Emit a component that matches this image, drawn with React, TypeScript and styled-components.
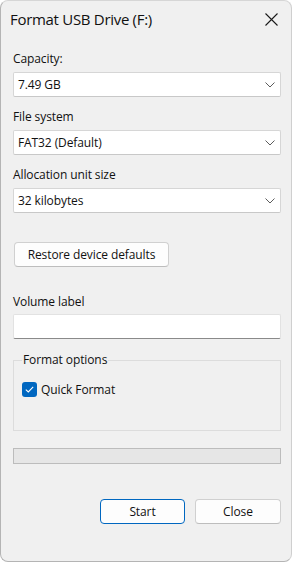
import React from "react";
import styled, { createGlobalStyle } from "styled-components";

const GlobalStyle = createGlobalStyle`
  html, body {
    margin: 0;
    padding: 0;
    background: #ffffff;
  }
  body {
    font-family: "Open Sans", "Noto Sans", sans-serif;
    color: #111111;
  }
`;

const Window = styled.div`
  width: 292px;
  height: 562px;
  box-sizing: border-box;
  background: #f0f0f0;
  border: 1px solid #b4b4b4;
  border-top-color: #d6d6d6;
  border-right-color: #cfcfcf;
  border-radius: 8px;
  display: flex;
  flex-direction: column;
  overflow: hidden;
`;

const TitleBar = styled.div`
  height: 36px;
  display: flex;
  align-items: center;
  justify-content: space-between;
  padding: 0 13px 0 9px;
`;

const Title = styled.div`
  font-size: 15px;
  letter-spacing: -0.3px;
  color: #111111;
`;

const CloseX = styled.div`
  width: 14px;
  height: 14px;
  display: flex;
  align-items: center;
  justify-content: center;
`;

const Body = styled.div`
  display: flex;
  flex-direction: column;
  padding: 14px 10px 0 12px;
`;

const Field = styled.div<{ $top?: number }>`
  display: flex;
  flex-direction: column;
  margin-top: ${(p) => p.$top ?? 0}px;
`;

const Label = styled.div<{ $gap?: number }>`
  font-size: 12px;
  line-height: 16px;
  letter-spacing: -0.1px;
  color: #111111;
  margin-bottom: ${(p) => p.$gap ?? 5}px;
`;

const Select = styled.div`
  height: 25px;
  box-sizing: border-box;
  background: #ffffff;
  border: 1px solid #d6d6d6;
  border-bottom-color: #c8c8c8;
  border-radius: 2px;
  display: flex;
  align-items: center;
  justify-content: space-between;
  padding: 0 5px 0 4px;
  font-size: 12px;
  letter-spacing: -0.1px;
  color: #111111;
`;

const TextBox = styled.div`
  height: 25px;
  box-sizing: border-box;
  background: #ffffff;
  border: 1px solid #e2e2e2;
  border-bottom: 1px solid #8a8a8a;
  border-radius: 2px;
`;

const Button = styled.button<{ $primary?: boolean; $width: number }>`
  width: ${(p) => p.$width}px;
  height: 25px;
  box-sizing: border-box;
  background: #fdfdfd;
  border: 1px solid ${(p) => (p.$primary ? "#0067c0" : "#d0d0d0")};
  border-bottom-color: ${(p) => (p.$primary ? "#0067c0" : "#bdbdbd")};
  border-radius: 4px;
  font-family: inherit;
  font-size: 12px;
  letter-spacing: -0.1px;
  color: #111111;
  padding: 0;
  cursor: default;
`;

const RestoreRow = styled.div`
  margin-top: 29px;
  padding-left: 1px;
  display: flex;
`;

const Group = styled.fieldset`
  margin: 13px 0 0 0;
  padding: 13px 8px 32px 8px;
  border: 1px solid #dcdcdc;
  border-radius: 0;
`;

const Legend = styled.legend`
  font-size: 12px;
  line-height: 16px;
  letter-spacing: -0.1px;
  padding: 0 1px;
  color: #111111;
`;

const CheckRow = styled.label`
  display: flex;
  align-items: center;
  gap: 4px;
  font-size: 12px;
  letter-spacing: -0.1px;
  color: #111111;
`;

const CheckBox = styled.span`
  width: 15px;
  height: 15px;
  border-radius: 3px;
  background: #0067c0;
  display: flex;
  align-items: center;
  justify-content: center;
`;

const Progress = styled.div`
  margin-top: 17px;
  height: 16px;
  box-sizing: border-box;
  background: #e6e6e6;
  border: 1px solid #bcbcbc;
`;

const ButtonRow = styled.div`
  margin-top: 35px;
  display: flex;
  justify-content: flex-end;
  gap: 10px;
`;

const Chevron = () => (
  <svg width="10" height="6" viewBox="0 0 10 6">
    <path d="M0.5 0.5 L5 5 L9.5 0.5" fill="none" stroke="#5c5c5c" strokeWidth="1" />
  </svg>
);

const Dropdown = ({ value }: { value: string }) => (
  <Select>
    <span>{value}</span>
    <Chevron />
  </Select>
);

export default function App() {
  return (
    <>
      <GlobalStyle />
      <Window>
        <TitleBar>
          <Title>Format USB Drive (F:)</Title>
          <CloseX>
            <svg width="13" height="13" viewBox="0 0 13 13">
              <path d="M0.5 0.5 L12.5 12.5 M12.5 0.5 L0.5 12.5" stroke="#1a1a1a" strokeWidth="1.1" />
            </svg>
          </CloseX>
        </TitleBar>
        <Body>
          <Field>
            <Label>Capacity:</Label>
            <Dropdown value="7.49 GB" />
          </Field>
          <Field $top={12}>
            <Label>File system</Label>
            <Dropdown value="FAT32 (Default)" />
          </Field>
          <Field $top={12}>
            <Label>Allocation unit size</Label>
            <Dropdown value="32 kilobytes" />
          </Field>
          <RestoreRow>
            <Button $width={155}>Restore device defaults</Button>
          </RestoreRow>
          <Field $top={27}>
            <Label $gap={4}>Volume label</Label>
            <TextBox />
          </Field>
          <Group>
            <Legend>Format options</Legend>
            <CheckRow>
              <CheckBox>
                <svg width="9" height="7" viewBox="0 0 9 7">
                  <path d="M0.8 3.6 L3.3 6 L8.2 0.9" fill="none" stroke="#ffffff" strokeWidth="1.1" />
                </svg>
              </CheckBox>
              Quick Format
            </CheckRow>
          </Group>
          <Progress />
          <ButtonRow>
            <Button $primary $width={85}>Start</Button>
            <Button $width={86}>Close</Button>
          </ButtonRow>
        </Body>
      </Window>
    </>
  );
}
